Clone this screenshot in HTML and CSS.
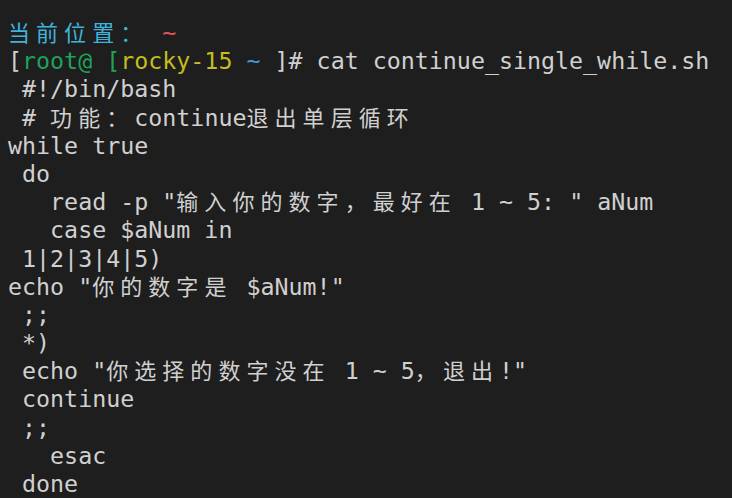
FILE: index.html
```html
<!DOCTYPE html>
<html lang="zh-CN">
<head>
<meta charset="utf-8">
<title>continue_single_while.sh</title>
<link rel="stylesheet" href="styles.css">
</head>
<body>
<main class="term">
<div class="ln"><span class="cyan w">当前位置：</span> <span class="red">~</span></div>
<div class="ln">[<span class="green">root@ [</span><span class="yellow">rocky-15</span> <span class="blue">~</span> ]# cat continue_single_while.sh</div>
<div class="ln"> #!/bin/bash</div>
<div class="ln"> # <span class="w">功能：</span>continue<span class="w">退出单层循环</span></div>
<div class="ln">while true</div>
<div class="ln"> do</div>
<div class="ln">   read -p "<span class="w">输入你的数字，最好在</span> 1 ~ 5: " aNum</div>
<div class="ln">   case $aNum in</div>
<div class="ln"> 1|2|3|4|5)</div>
<div class="ln">echo "<span class="w">你的数字是</span> $aNum!"</div>
<div class="ln"> ;;</div>
<div class="ln"> *)</div>
<div class="ln"> echo "<span class="w">你选择的数字没在</span> 1 ~ 5<span class="w">，退出</span>!"</div>
<div class="ln"> continue</div>
<div class="ln"> ;;</div>
<div class="ln">   esac</div>
<div class="ln"> done</div>
</main>
</body>
</html>
```
FILE: styles.css
```css
html, body {
  margin: 0;
  padding: 0;
  background: #1e1e1e;
  width: 732px;
  height: 498px;
  overflow: hidden;
}

.term {
  padding: 19px 0 0 8px;
  font-family: "DejaVu Sans Mono", "Noto Sans CJK SC", monospace;
  font-size: 23.3px;
  color: #d0d0d0;
}

.ln {
  height: 28.2px;
  line-height: 28.2px;
  white-space: pre;
}

.w {
  font-family: "Noto Sans CJK SC", sans-serif;
  font-size: 22px;
  line-height: 0;
  letter-spacing: 6.06px;
}

.cyan { color: #3eb4dc; }
.red { color: #e05656; }
.green { color: #1ea35d; }
.yellow { color: #c4bd1e; }
.blue { color: #3c9dd2; }
```
